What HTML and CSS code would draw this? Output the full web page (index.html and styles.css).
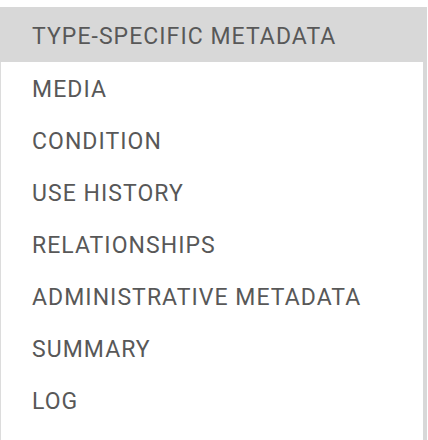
FILE: index.html
```html
<!DOCTYPE html>
<html>
<head>
<meta charset="utf-8">
<link rel="stylesheet" href="styles.css">
</head>
<body>
<nav class="panel">
  <ul class="menu">
    <li class="item active">TYPE-SPECIFIC METADATA</li>
    <li class="item">MEDIA</li>
    <li class="item">CONDITION</li>
    <li class="item">USE HISTORY</li>
    <li class="item">RELATIONSHIPS</li>
    <li class="item">ADMINISTRATIVE METADATA</li>
    <li class="item">SUMMARY</li>
    <li class="item">LOG</li>
  </ul>
</nav>
</body>
</html>
```
FILE: styles.css
```css
html, body {
  margin: 0;
  padding: 0;
  background: #fff;
}
.panel {
  width: 427px;
  height: 440px;
  padding-top: 7px;
  box-sizing: border-box;
  overflow: hidden;
}
.menu {
  list-style: none;
  margin: 0;
  padding: 0;
  border-left: 1px solid #dcdcdc;
  border-right: 4px solid #d8d8d8;
  height: 100%;
}
.item {
  height: 52px;
  padding-top: 2px;
  line-height: 52px;
  box-sizing: border-box;
  padding-left: 31px;
  font-family: Roboto, "Liberation Sans", sans-serif;
  font-size: 23px;
  letter-spacing: 1.05px;
  color: #585858;
  white-space: nowrap;
}
.item.active {
  background: #d8d8d8;
  height: 55px;
  padding-top: 4px;
  line-height: 52px;
  margin-left: -1px;
  margin-right: -4px;
  padding-left: 32px;
}
```
